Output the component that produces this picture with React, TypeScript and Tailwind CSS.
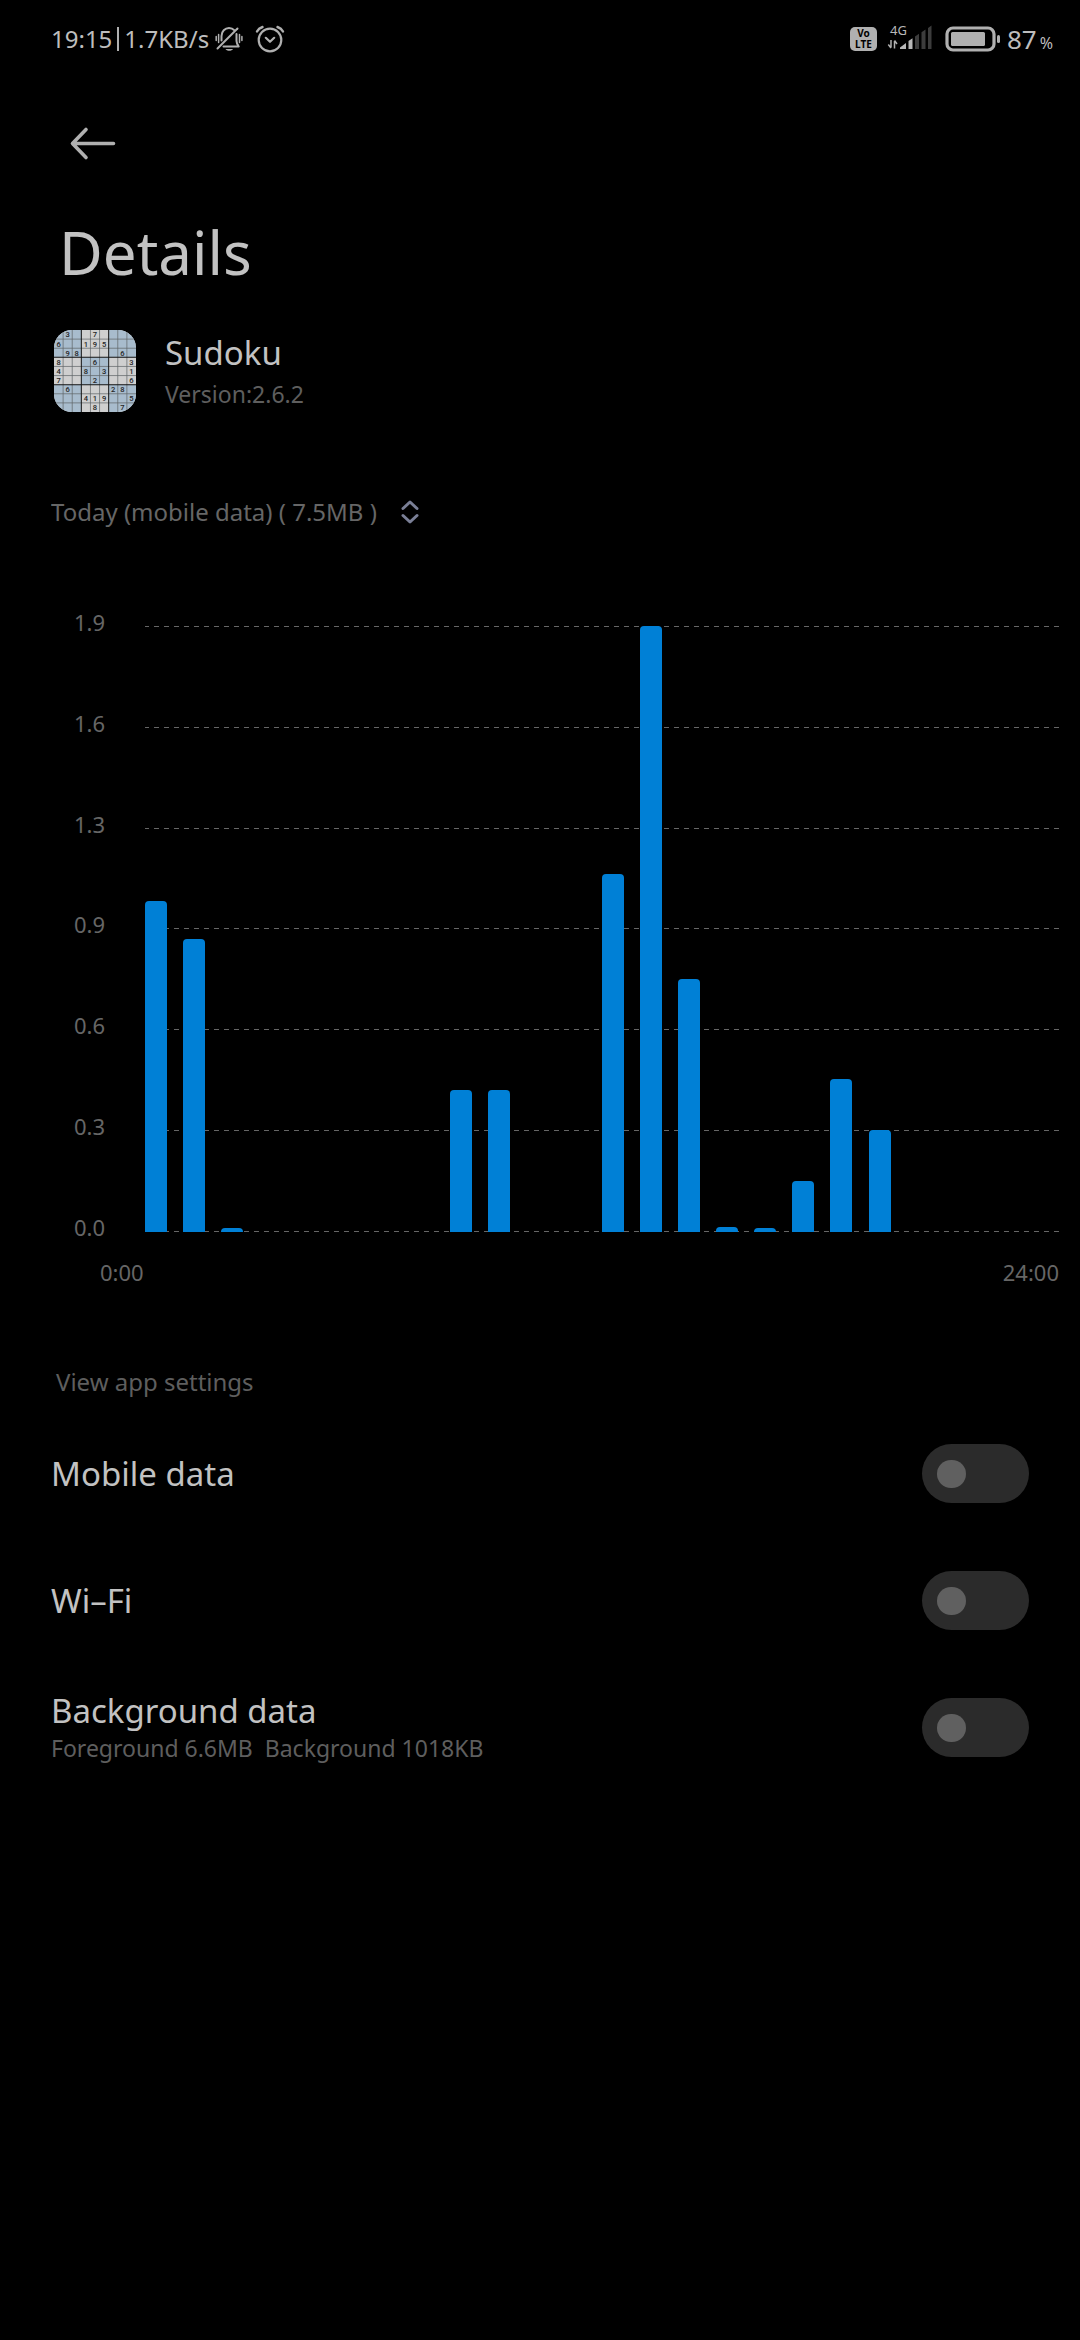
import { useState } from 'react';

const hourlyBars = [
  331, 293, 4, 0, 0, 0, 0, 0, 142, 142, 0, 0, 358, 606, 253, 5, 4, 51, 153, 102, 0, 0, 0, 0,
];
const scale = ['1.9', '1.6', '1.3', '0.9', '0.6', '0.3', '0.0'];
const sudokuRows = [
  '.3..7....',
  '6..195...',
  '.98....6.',
  '8...6...3',
  '4..8.3..1',
  '7...2...6',
  '.6....28.',
  '...419..5',
  '....8..7.',
];

function BellOffIcon() {
  return (
    <svg className="h-[28px] w-[28px]" viewBox="0 0 28 28" fill="none" stroke="#b0b0b0" strokeWidth="2" strokeLinecap="round">
      <path d="M6.5 15.5V11C6.500 6.500 10 3 14 3c2 0 4 .8 5.200 2.200" />
      <path d="M21.500 9v7c0 2 .8 3.400 2.200 5.500H8.500" strokeLinejoin="round" />
      <path d="M2.500 23.500L22.500 3.500" />
      <path d="M3.600 9.500v8M1.200 11.500v4M24.500 9.500v8M26.900 11.500v4" strokeWidth="1.500" />
      <path d="M10.500 24h7.500c-1 2.400-6.500 2.400-7.500 0z" fill="#b0b0b0" stroke="none" />
    </svg>
  );
}

function AlarmIcon() {
  return (
    <svg className="h-[28px] w-[30px]" viewBox="0 0 30 28" fill="none" stroke="#b0b0b0" strokeWidth="2.200" strokeLinecap="round" strokeLinejoin="round">
      <circle cx="15" cy="15" r="11.300" />
      <path d="M10.800 12.800l4.200 4 4.200-4" />
      <path d="M2 6.500C3 4.500 5 2.800 7.500 2M28 6.500c-1-2-3-3.700-5.500-4.500" strokeWidth="2.400" />
    </svg>
  );
}

function SignalIcon() {
  return (
    <svg className="h-[40px] w-[46px]" viewBox="0 -6 46 40" fill="none">
      <path d="M4 15v7.500M1.300 19.500L4 23M7.500 23.500v-7.500M10 19L7.500 15.500" stroke="#b0b0b0" strokeWidth="1.500" />
      <path d="M13 24v-1.500l6-4.500v6zM21.500 24v-8l4-2.800v10.800z" fill="#b8b8b8" />
      <path d="M28 24V11.500l4-2.800V24zM34.500 24V7.300l4-2.800V24zM41 24V3l3.500-2.500V24z" fill="#3c3c3c" />
      <text x="3" y="10" fill="#b8b8b8" fontSize="13" fontFamily="Noto Sans, sans-serif">4G</text>
    </svg>
  );
}

function BatteryIcon() {
  return (
    <svg className="h-[26px] w-[56px]" viewBox="0 0 56 26" fill="none">
      <rect x="2" y="2" width="47" height="22" rx="6" stroke="#b0b0b0" strokeWidth="3.200" />
      <rect x="6" y="6" width="34" height="14" rx="1.500" fill="#b0b0b0" />
      <rect x="52" y="9" width="3" height="8" rx="1.500" fill="#b0b0b0" />
    </svg>
  );
}

function SudokuIcon() {
  return (
    <svg className="h-[82px] w-[82px] rounded-[18px]" viewBox="0 0 81 81" aria-label="Sudoku icon">
      <rect width="81" height="81" fill="#cfcfcf" />
      <path d="M0 0h27v27H0zM54 0h27v27H54zM27 27h27v27H27zM0 54h27v27H0zM54 54h27v27H54z" fill="#a8bccd" />
      <path d="M9 0v81M18 0v81M36 0v81M45 0v81M63 0v81M72 0v81M0 9h81M0 18h81M0 36h81M0 45h81M0 63h81M0 72h81" stroke="#5f6468" strokeWidth=".7" />
      <path d="M27 0v81M54 0v81M0 27h81M0 54h81" stroke="#151515" strokeWidth="1" />
      {sudokuRows.map((row, r) =>
        row.split('').map((digit, c) =>
          digit === '.' ? null : (
            <text
              key={`${r}-${c}`}
              x={c * 9 + 4.5}
              y={r * 9 + 7.3}
              textAnchor="middle"
              fontSize="7.5"
              fontFamily="Roboto, sans-serif"
              fontWeight="500"
              fill="#252525"
            >
              {digit}
            </text>
          ),
        ),
      )}
    </svg>
  );
}

function StatusBar() {
  return (
    <header className="flex h-[78px] items-center justify-between pl-[51px] pr-[27px] text-[24px] text-[#bdbdbd]">
      <div className="flex items-center">
        <span>19:15</span>
        <span className="mx-[5px] h-[24px] w-[2px] bg-[#b0b0b0]" />
        <span>1.7KB/s</span>
        <span className="ml-[6px] flex items-center gap-[12px]">
          <BellOffIcon />
          <AlarmIcon />
        </span>
      </div>
      <div className="flex items-center">
        <span className="flex h-[24px] w-[27px] flex-col items-center justify-center rounded-[5px] bg-[#b0b0b0] text-[10px] leading-[11px] font-bold text-black">
          <span>Vo</span>
          <span>LTE</span>
        </span>
        <span className="ml-[10px]">
          <SignalIcon />
        </span>
        <span className="ml-[12px]">
          <BatteryIcon />
        </span>
        <span className="ml-[6px] flex items-baseline gap-[3px]">
          <span className="text-[26px]">87</span>
          <span className="text-[16px]">%</span>
        </span>
      </div>
    </header>
  );
}

function UsageChart() {
  return (
    <section aria-label="Hourly data usage" className="mt-[94px] pr-[21px] text-[22px] text-[#666666]">
      <div className="flex">
        <div className="-mt-[16px] flex h-[629px] w-[105px] flex-col justify-between text-right leading-[24px]">
          {scale.map((value) => (
            <span key={value}>{value}</span>
          ))}
        </div>
        <div className="ml-[40px] grid h-[606px] flex-1">
          <div className="flex flex-col justify-between [grid-area:1/1]">
            {scale.map((value) => (
              <div
                key={value}
                className="h-px bg-[repeating-linear-gradient(90deg,#666666_0_4px,transparent_4px_9px,#666666_9px_10px)]"
              />
            ))}
          </div>
          <div className="grid items-end [grid-area:1/1] [grid-template-columns:repeat(24,minmax(0,1fr))]">
            {hourlyBars.map((height, hour) => (
              <div key={hour} className="w-[22px] rounded-t-[4px] bg-[#0080d6]" style={{ height }} />
            ))}
          </div>
        </div>
      </div>
      <div className="mt-[15px] flex justify-between pl-[100px] leading-[36px]">
        <span>0:00</span>
        <span>24:00</span>
      </div>
    </section>
  );
}

function SettingRow({ id, title, detail }: { id: string; title: string; detail?: string }) {
  const [on, setOn] = useState(false);
  return (
    <div className="flex h-[127px] items-center justify-between">
      <label htmlFor={id} className="flex flex-col">
        <span className="text-[33px] leading-[40px] text-[#c2c2c2]">{title}</span>
        {detail && <span className="whitespace-pre text-[23px] leading-[34px] text-[#5e5e5e]">{detail}</span>}
      </label>
      <input
        id={id}
        type="checkbox"
        role="switch"
        checked={on}
        onChange={(e) => setOn(e.target.checked)}
        className="flex h-[59px] w-[107px] shrink-0 appearance-none items-center rounded-full bg-[#2b2b2b] px-[15px] before:h-[28px] before:w-[29px] before:rounded-full before:bg-[#606060] before:content-[''] checked:justify-end checked:bg-[#0080d6] checked:before:bg-white"
      />
    </div>
  );
}

export default function App() {
  return (
    <div className="min-h-screen bg-black font-['Noto_Sans',sans-serif] text-[#c2c2c2]">
      <StatusBar />
      <main>
        <button type="button" aria-label="Back" className="ml-[69px] mt-[45px] block h-[40px]">
          <svg className="h-[40px] w-[48px]" viewBox="0 0 48 40" fill="none" stroke="#b0b0b0" strokeWidth="3.600" strokeLinecap="round" strokeLinejoin="round">
            <path d="M3.500 20.500h41M17 6.500L3.500 20.500l13.500 14" />
          </svg>
        </button>
        <h1 className="mt-[53px] pl-[59px] text-[60px] leading-[72px]">Details</h1>
        <section className="mt-[40px] flex items-center gap-[29px] pl-[54px]">
          <SudokuIcon />
          <div className="pt-[4px]">
            <h2 className="text-[33px] leading-[42px]">Sudoku</h2>
            <p className="text-[23px] leading-[40px] text-[#5e5e5e]">Version:2.6.2</p>
          </div>
        </section>
        <div className="mt-[78px] flex h-[40px] items-center pl-[51px] text-[#666666]">
          <select
            aria-label="Usage period"
            className="appearance-none bg-transparent text-[24px] leading-[40px] [field-sizing:content]"
          >
            <option>Today (mobile data) ( 7.5MB )</option>
          </select>
          <svg className="pointer-events-none ml-[23px] h-[26px] w-[20px]" viewBox="0 0 20 26" fill="none" stroke="#7a7f96" strokeWidth="3" strokeLinecap="round" strokeLinejoin="round">
            <path d="M3 9.500l7-6.500 7 6.500M3 16.500l7 6.500 7-6.500" />
          </svg>
        </div>
        <UsageChart />
        <section className="mt-[72px] pl-[51px] pr-[51px]">
          <h3 className="pl-[5px] text-[24px] leading-[40px] text-[#5e5e5e]">View app settings</h3>
          <div className="mt-[8px]">
            <SettingRow id="mobile-data" title="Mobile data" />
            <SettingRow id="wifi" title="Wi–Fi" />
            <SettingRow id="background-data" title="Background data" detail="Foreground 6.6MB  Background 1018KB" />
          </div>
        </section>
      </main>
    </div>
  );
}
